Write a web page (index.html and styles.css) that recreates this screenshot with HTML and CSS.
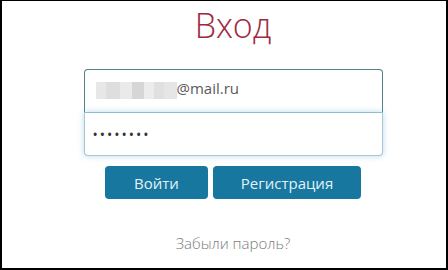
FILE: index.html
```html
<!DOCTYPE html>
<html lang="ru">
<head>
<meta charset="utf-8">
<link rel="stylesheet" href="styles.css">
</head>
<body>
<div class="frame">
  <div class="login">
    <h1 class="title">Вход</h1>
    <div class="fields">
      <div class="field field-email"><span class="blur"></span><span class="email-text">@mail.ru</span></div>
      <div class="field field-pass"><span class="dots">••••••••</span></div>
    </div>
    <div class="buttons">
      <button class="btn btn-login">Войти</button>
      <button class="btn btn-reg">Регистрация</button>
    </div>
    <a class="forgot" href="#">Забыли пароль?</a>
  </div>
</div>
</body>
</html>
```
FILE: styles.css
```css
* { box-sizing: border-box; }
html, body { margin: 0; padding: 0; background: #fff; }
.frame {
  width: 448px;
  height: 270px;
  border-style: solid;
  border-color: #000;
  border-width: 1px 2px 2px 2px;
  background: #fff;
  font-family: "Open Sans", "Liberation Sans", sans-serif;
}
.login {
  display: flex;
  flex-direction: column;
  align-items: center;
  padding-left: 18px;
}
.title {
  margin: 7px 0 0 0;
  font-size: 34px;
  line-height: 34px;
  font-weight: 300;
  color: #9e2a40;
}
.fields {
  margin-top: 27px;
  width: 299px;
  display: flex;
  flex-direction: column;
}
.field {
  display: flex;
  align-items: flex-start;
  font-size: 15px;
  line-height: 20px;
  background: #fff;
}
.field-email {
  height: 43px;
  border: 1px solid #557f89;
  border-bottom: none;
  border-radius: 4px 4px 0 0;
  padding: 8px 0 0 11px;
  color: #5a5a5a;
}
.blur {
  width: 81px;
  height: 17px;
  margin-top: 4px;
  background:
    linear-gradient(to right,
      #e6e6e6 0, #e6e6e6 10px,
      #dcdcdc 10px, #dcdcdc 24px,
      #e9e9e9 24px, #e9e9e9 36px,
      #d4d4d4 36px, #d4d4d4 48px,
      #ebebeb 48px, #ebebeb 58px,
      #dedede 58px, #dedede 68px,
      #e4e4e4 68px, #e4e4e4 81px);
  opacity: 0.95;
}
.email-text { margin-left: 0; }
.field-pass {
  height: 44px;
  border: 1px solid #a8c6d3;
  border-top-color: #8dbdd2;
  border-radius: 0 0 4px 4px;
  box-shadow: 0 0 6px rgba(102, 175, 213, 0.45);
  padding: 12px 0 0 8px;
  color: #333;
}
.dots {
  font-size: 14px;
  letter-spacing: 2px;
}
.buttons {
  margin-top: 10px;
  display: flex;
  gap: 5px;
}
.btn {
  height: 33px;
  border: none;
  border-radius: 4px;
  background: #17779f;
  color: #e3f2f9;
  font-family: "Open Sans", "Liberation Sans", sans-serif;
  font-size: 15px;
  padding: 0;
}
.btn-login { width: 103px; }
.btn-reg { width: 148px; }
.forgot {
  margin-top: 34px;
  font-size: 15px;
  line-height: 20px;
  font-weight: 300;
  color: #7a7a7a;
  text-decoration: none;
}
```
